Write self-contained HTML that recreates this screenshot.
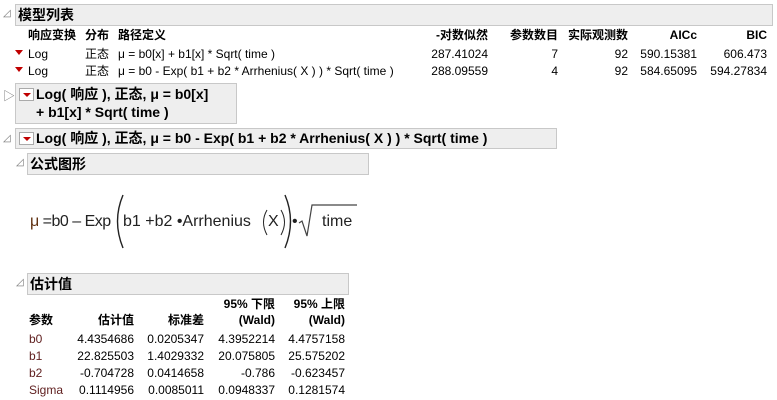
<!DOCTYPE html>
<html><head><meta charset="utf-8"><style>
body{margin:0;width:777px;height:400px;background:#fff;position:relative;overflow:hidden;font-family:"Liberation Sans","Noto Sans CJK SC",sans-serif;font-size:12px;color:#000}
.a{position:absolute;white-space:nowrap;line-height:15px}
.r{text-align:right}
.box{position:absolute;background:#eeeeee;border:1px solid #c8c8c8;box-sizing:border-box}
.h{font-weight:bold;font-size:14px;line-height:17px}
.b{font-weight:bold}
.tri{position:absolute;font-size:10px;color:#777}
.dd{position:absolute;width:0;height:0;border-left:4px solid transparent;border-right:4px solid transparent;border-top:5px solid #c00000}
.ddb{position:absolute;width:15px;height:13px;border:1px solid #aaa;background:#fff;box-sizing:border-box}
.ddb:after{content:"";position:absolute;left:3px;top:4px;border-left:4px solid transparent;border-right:4px solid transparent;border-top:4px solid #c00000}
.p{color:#602020}
.f{font-size:16px;color:#222;line-height:18px}
</style></head><body>
<div class="tri" style="left:3px;top:8px">◿</div>
<div class="box" style="left:15px;top:4px;width:758px;height:22px"></div>
<div class="a h" style="left:18px;top:7px">模型列表</div>
<div class="a b" style="left:28px;top:28px">响应变换</div>
<div class="a b" style="left:85px;top:28px">分布</div>
<div class="a b" style="left:118px;top:28px">路径定义</div>
<div class="a b r" style="left:400px;width:88px;top:28px">-对数似然</div>
<div class="a b r" style="left:480px;width:78px;top:28px">参数数目</div>
<div class="a b r" style="left:550px;width:78px;top:28px">实际观测数</div>
<div class="a b r" style="left:620px;width:77px;top:28px">AICc</div>
<div class="a b r" style="left:690px;width:77px;top:28px">BIC</div>
<div class="dd" style="left:15px;top:50px"></div>
<div class="a" style="left:28px;top:47px">Log</div>
<div class="a" style="left:85px;top:47px">正态</div>
<div class="a" style="left:118px;top:47px">μ = b0[x] + b1[x] * Sqrt( time )</div>
<div class="a r" style="left:400px;width:88px;top:47px">287.41024</div>
<div class="a r" style="left:480px;width:78px;top:47px">7</div>
<div class="a r" style="left:550px;width:78px;top:47px">92</div>
<div class="a r" style="left:620px;width:77px;top:47px">590.15381</div>
<div class="a r" style="left:690px;width:77px;top:47px">606.473</div>
<div class="dd" style="left:15px;top:67px"></div>
<div class="a" style="left:28px;top:64px">Log</div>
<div class="a" style="left:85px;top:64px">正态</div>
<div class="a" style="left:118px;top:64px">μ = b0 - Exp( b1 + b2 * Arrhenius( X ) ) * Sqrt( time )</div>
<div class="a r" style="left:400px;width:88px;top:64px">288.09559</div>
<div class="a r" style="left:480px;width:78px;top:64px">4</div>
<div class="a r" style="left:550px;width:78px;top:64px">92</div>
<div class="a r" style="left:620px;width:77px;top:64px">584.65095</div>
<div class="a r" style="left:690px;width:77px;top:64px">594.27834</div>

<div class="tri" style="left:3px;top:87px;font-size:12px">▷</div>
<div class="box" style="left:15px;top:83px;width:222px;height:41px"></div>
<div class="ddb" style="left:19px;top:88px"></div>
<div class="a h" style="left:36px;top:86px">Log( 响应 ), 正态, μ = b0[x]</div>
<div class="a h" style="left:36px;top:104px">+ b1[x] * Sqrt( time )</div>

<div class="tri" style="left:3px;top:133px">◿</div>
<div class="box" style="left:15px;top:128px;width:542px;height:21px"></div>
<div class="ddb" style="left:19px;top:132px"></div>
<div class="a h" style="left:36px;top:130px">Log( 响应 ), 正态, μ = b0 - Exp( b1 + b2 * Arrhenius( X ) ) * Sqrt( time )</div>

<div class="tri" style="left:16px;top:157px">◿</div>
<div class="box" style="left:27px;top:153px;width:342px;height:22px"></div>
<div class="a h" style="left:30px;top:156px">公式图形</div>
<div class="a f" style="left:30px;top:213px;letter-spacing:-0.5px"><span style="color:#603010">μ</span> =b0 – Exp</div>
<svg class="a" style="left:115px;top:190px" width="250" height="62">
<path d="M8 5 Q-3 31 8 58" stroke="#222" stroke-width="1.4" fill="none"/>
<path d="M152 20 Q145 32 152 45" stroke="#222" stroke-width="1" fill="none"/>
<path d="M166 20 Q173 32 166 45" stroke="#222" stroke-width="1" fill="none"/>
<path d="M170 5 Q181 31 170 58" stroke="#222" stroke-width="1.4" fill="none"/>
<path d="M184 33 L187 31 L192 46 L197 15 L242 15" stroke="#444" stroke-width="1.2" fill="none"/>
</svg>
<div class="a f" style="left:123px;top:213px">b1 +b2 •Arrhenius</div>
<div class="a f" style="left:268px;top:213px">X</div>
<div class="a f" style="left:292px;top:213px">•</div>
<div class="a f" style="left:322px;top:213px">time</div>

<div class="tri" style="left:16px;top:277px">◿</div>
<div class="box" style="left:27px;top:273px;width:322px;height:22px"></div>
<div class="a h" style="left:30px;top:276px">估计值</div>
<div class="a b r" style="left:200px;width:75px;top:297px">95% 下限</div>
<div class="a b r" style="left:270px;width:75px;top:297px">95% 上限</div>
<div class="a b" style="left:29px;top:313px">参数</div>
<div class="a b r" style="left:60px;width:74px;top:313px">估计值</div>
<div class="a b r" style="left:130px;width:74px;top:313px">标准差</div>
<div class="a b r" style="left:200px;width:75px;top:313px">(Wald)</div>
<div class="a b r" style="left:270px;width:75px;top:313px">(Wald)</div>
<div class="a p" style="left:29px;top:332px">b0</div>
<div class="a r" style="left:60px;width:74px;top:332px">4.4354686</div>
<div class="a r" style="left:130px;width:74px;top:332px">0.0205347</div>
<div class="a r" style="left:200px;width:75px;top:332px">4.3952214</div>
<div class="a r" style="left:270px;width:75px;top:332px">4.4757158</div>
<div class="a p" style="left:29px;top:349px">b1</div>
<div class="a r" style="left:60px;width:74px;top:349px">22.825503</div>
<div class="a r" style="left:130px;width:74px;top:349px">1.4029332</div>
<div class="a r" style="left:200px;width:75px;top:349px">20.075805</div>
<div class="a r" style="left:270px;width:75px;top:349px">25.575202</div>
<div class="a p" style="left:29px;top:366px">b2</div>
<div class="a r" style="left:60px;width:74px;top:366px">-0.704728</div>
<div class="a r" style="left:130px;width:74px;top:366px">0.0414658</div>
<div class="a r" style="left:200px;width:75px;top:366px">-0.786</div>
<div class="a r" style="left:270px;width:75px;top:366px">-0.623457</div>
<div class="a p" style="left:29px;top:383px">Sigma</div>
<div class="a r" style="left:60px;width:74px;top:383px">0.1114956</div>
<div class="a r" style="left:130px;width:74px;top:383px">0.0085011</div>
<div class="a r" style="left:200px;width:75px;top:383px">0.0948337</div>
<div class="a r" style="left:270px;width:75px;top:383px">0.1281574</div>
</body></html>
